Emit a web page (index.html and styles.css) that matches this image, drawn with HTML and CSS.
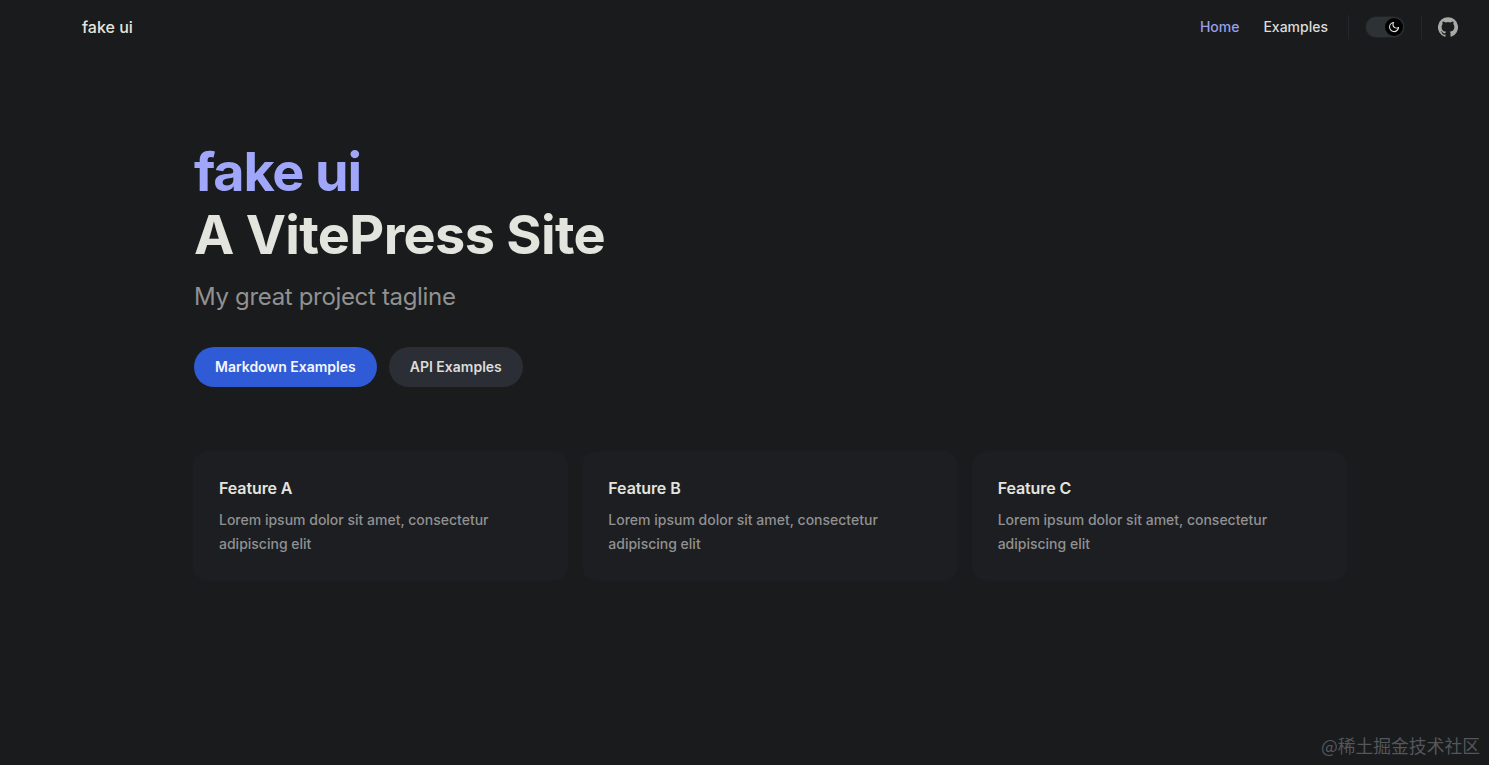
FILE: index.html
```html
<!DOCTYPE html>
<html lang="en">
<head>
    <meta charset="UTF-8">
    <meta name="viewport" content="width=device-width, initial-scale=1.0">
    <title>fake ui | A VitePress Site</title>
    <link rel="stylesheet" href="styles.css">
</head>
<body>
    <header class="navbar">
        <a class="navTitle" href="#">fake ui</a>
        <nav class="navRight">
            <a class="navLink active" href="#">Home</a>
            <a class="navLink" href="#">Examples</a>
            <span class="navDivider"></span>
            <button class="switch" type="button" aria-label="Toggle dark mode">
                <span class="switchCheck">
                    <svg viewBox="0 0 24 24" width="12" height="12" fill="#e8e8e3">
                        <path d="M12.1 22c-.3 0-.6 0-.9 0-5.5-.5-9.5-5.400-9-10.900.4-4.800 4.200-8.600 9-9 .4 0 .8.200 1 .5.200.3.200.8 0 1.100-2 2.700-1.400 6.400 1.300 8.400 2.100 1.600 5 1.600 7.100 0 .3-.2.700-.3 1.100-.1.300.2.500.6.500 1-.2 2.700-1.500 5.200-3.600 7-1.900 1.600-4.200 2.400-6.500 2.400zM9.300 4.400c-2.900 1-5 3.600-5.200 6.800-.4 4.400 2.800 8.300 7.200 8.700 2.100.2 4.200-.4 5.800-1.800 1.100-.9 1.900-2.100 2.400-3.400-2.500.9-5.300.5-7.500-1.100-2.800-2.200-3.900-6-2.700-9.200z"/>
                    </svg>
                </span>
            </button>
            <span class="navDivider"></span>
            <a class="githubLink" href="#" aria-label="GitHub">
                <svg viewBox="0 0 24 24" width="20" height="20" fill="#a9a9a6">
                    <path d="M12 .3a12 12 0 0 0-3.800 23.400c.6.100.8-.3.800-.6v-2c-3.300.7-4-1.600-4-1.600-.6-1.400-1.400-1.800-1.400-1.800-1-.7.100-.7.100-.7 1.200.1 1.800 1.200 1.800 1.200 1 1.800 2.800 1.300 3.500 1 .1-.8.400-1.300.8-1.600-2.700-.3-5.500-1.300-5.500-6 0-1.200.5-2.300 1.300-3.100-.2-.4-.6-1.600 0-3.200 0 0 1-.3 3.400 1.200a11.500 11.500 0 0 1 6 0c2.300-1.500 3.300-1.200 3.300-1.200.6 1.600.2 2.800 0 3.200.9.800 1.300 1.900 1.300 3.200 0 4.600-2.800 5.600-5.500 5.900.5.400.9 1 .9 2.200v3.300c0 .3.100.7.800.6A12 12 0 0 0 12 .3"/>
                </svg>
            </a>
        </nav>
    </header>

    <main class="page">
        <section class="hero">
            <h1 class="heroHeading">
                <span class="heroName">fake ui</span>
                <span class="heroText">A VitePress Site</span>
            </h1>
            <p class="heroTagline">My great project tagline</p>
            <div class="heroActions">
                <a class="btn btnBrand" href="#">Markdown Examples</a>
                <a class="btn btnAlt" href="#">API Examples</a>
            </div>
        </section>

        <section class="features">
            <article class="feature">
                <h2 class="featureTitle">Feature A</h2>
                <p class="featureText">Lorem ipsum dolor sit amet, consectetur adipiscing elit</p>
            </article>
            <article class="feature">
                <h2 class="featureTitle">Feature B</h2>
                <p class="featureText">Lorem ipsum dolor sit amet, consectetur adipiscing elit</p>
            </article>
            <article class="feature">
                <h2 class="featureTitle">Feature C</h2>
                <p class="featureText">Lorem ipsum dolor sit amet, consectetur adipiscing elit</p>
            </article>
        </section>
    </main>

    <div class="watermark">@稀土掘金技术社区</div>
</body>
</html>
```

FILE: styles.css
```css
:root {
    --bg-color: #191b1d;
    --card-color: #1c1e22;
    --brand-color: #a0a7fa;
    --text-1: #e4e4de;
    --text-2: #919191;
}
* {
    box-sizing: border-box;
}
html, body {
    height: 100%;
}
body {
    margin: 0;
    overflow: hidden;
    background-color: var(--bg-color);
    color: var(--text-1);
    font-family: 'Inter', sans-serif;
    font-size: 16px;
}
a {
    color: inherit;
    text-decoration: none;
}

/* top bar */
.navbar {
    height: 53px;
    padding: 0 31px 0 82px;
    display: flex;
    align-items: center;
    justify-content: space-between;
}
.navTitle {
    font-size: 16px;
    font-weight: 500;
}
.navRight {
    display: flex;
    align-items: center;
}
.navLink {
    font-size: 14px;
    font-weight: 500;
    margin-right: 24px;
    color: #dcdcd8;
}
.navLink.active {
    color: #9a9fe8;
}
.navDivider {
    width: 1px;
    height: 24px;
    background: #25262a;
}
.navLink + .navDivider {
    margin-left: -4px;
}
.switch {
    width: 40px;
    height: 22px;
    margin: 0 16px;
    padding: 0;
    display: flex;
    align-items: center;
    justify-content: flex-end;
    background: #2d3235;
    border: 1px solid #202226;
    border-radius: 11px;
}
.switchCheck {
    width: 18px;
    height: 18px;
    margin-right: 1px;
    display: flex;
    align-items: center;
    justify-content: center;
    background: #000;
    border-radius: 50%;
}
.githubLink {
    margin-left: 16px;
    display: flex;
}

/* hero */
.page {
    width: 1152px;
    margin-left: 194px;
}
.hero {
    padding-top: 87px;
}
.heroHeading {
    margin: 0;
    font-size: 54px;
    line-height: 64px;
    font-weight: 700;
}
.heroName, .heroText {
    display: block;
}
.heroName {
    margin-bottom: -1px;
    color: var(--brand-color);
    letter-spacing: -1.18px;
}
.heroText {
    letter-spacing: -0.69px;
}
.heroTagline {
    margin: 12px 0 0;
    font-size: 24px;
    line-height: 36px;
    font-weight: 400;
    letter-spacing: -0.33px;
    color: var(--text-2);
}
.heroActions {
    margin-top: 32px;
    display: flex;
    gap: 12px;
}
.btn {
    height: 40px;
    padding: 0 21px 2px;
    display: flex;
    align-items: center;
    font-size: 14px;
    font-weight: 600;
    border-radius: 20px;
}
.btnBrand {
    background: #2f5bd6;
    color: #f4f6fc;
}
.btnAlt {
    background: #2c2e35;
    color: #dcdcd8;
}

/* feature cards */
.features {
    margin-top: 65px;
    display: grid;
    grid-template-columns: repeat(3, 1fr);
    gap: 16px;
}
.feature {
    height: 128px;
    padding: 25px;
    background: var(--card-color);
    border-radius: 12px;
    box-shadow: 0 0 0 1px #1b1d20;
}
.featureTitle {
    margin: -1px 0 0;
    font-size: 16px;
    line-height: 24px;
    font-weight: 600;
    letter-spacing: -0.1px;
    color: #e4e4de;
}
.featureText {
    margin: 8px 0 0;
    font-size: 14px;
    line-height: 24px;
    font-weight: 500;
    color: var(--text-2);
}

.watermark {
    position: absolute;
    right: 9px;
    bottom: 8px;
    font-family: 'Noto Sans CJK SC', sans-serif;
    font-size: 17.8px;
    line-height: 24px;
    color: #55565a;
}
```
